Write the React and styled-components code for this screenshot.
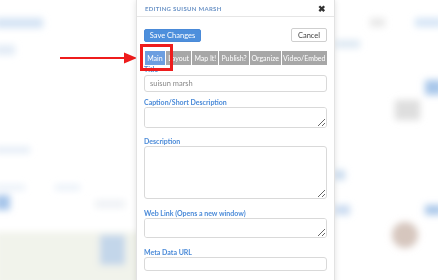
import React from 'react';
import styled, { createGlobalStyle } from 'styled-components';

const GlobalStyle = createGlobalStyle`
  html, body {
    margin: 0;
    padding: 0;
    background: #fff;
    overflow: hidden;
  }
  body {
    font-family: Lato, "Open Sans", "Liberation Sans", sans-serif;
  }
`;

const Page = styled.div`
  position: relative;
  width: 438px;
  height: 280px;
  overflow: hidden;
  padding-left: 136px;
  box-sizing: border-box;
`;

const Backdrop = styled.svg`
  position: absolute;
  left: 0;
  top: 0;
  width: 438px;
  height: 280px;
`;

const Modal = styled.div`
  position: relative;
  width: 199px;
  height: 300px;
  background: #fff;
  border-left: 1px solid #e2e2e2;
  border-right: 1px solid #e2e2e2;
  box-shadow: 0 0 6px rgba(0, 0, 0, 0.12);
  box-sizing: border-box;
`;

const Header = styled.div`
  height: 17px;
  display: flex;
  align-items: center;
  justify-content: space-between;
  padding: 1px 8px 0 8px;
  border-bottom: 1px solid #e6e6e6;
  box-sizing: border-box;
`;

const Title = styled.span`
  font-size: 6px;
  font-weight: 700;
  letter-spacing: 0.3px;
  color: #6b93c6;
  text-transform: uppercase;
`;

const Close = styled.span`
  font-size: 9px;
  font-weight: 700;
  color: #333;
  line-height: 1;
`;

const Body = styled.div`
  padding: 0 7px;
`;

const Toolbar = styled.div`
  display: flex;
  justify-content: space-between;
  align-items: center;
  margin-top: 11px;
`;

const Button = styled.button`
  font-family: inherit;
  font-size: 7.5px;
  white-space: nowrap;
  height: ${p => (p.primary ? '13px' : '14px')};
  padding: 0;
  border-radius: 2px;
  border: 1px solid ${p => (p.primary ? '#4a8ad8' : '#cfcfcf')};
  background: ${p => (p.primary ? '#4d8fdc' : '#fff')};
  color: ${p => (p.primary ? '#fff' : '#444')};
  width: ${p => p.w};
  cursor: pointer;
`;

const Tabs = styled.div`
  display: flex;
  gap: 1px;
  margin: 9px 0 0 1px;
`;

const Tab = styled.div`
  height: 14px;
  width: ${p => p.w}px;
  display: flex;
  align-items: center;
  justify-content: center;
  font-size: 7px;
  color: #fff;
  background: ${p => (p.active ? '#6c9ee0' : '#a7a7a7')};
`;

const Field = styled.div`
  margin-bottom: ${p => p.mb}px;
`;

const Label = styled.div`
  height: ${p => p.h || 8}px;
  line-height: ${p => p.h || 8}px;
  margin-bottom: 1px;
  font-size: 7px;
  font-weight: 700;
  color: #4a8ad8;
`;

const Input = styled.input`
  display: block;
  width: 100%;
  height: ${p => p.h}px;
  box-sizing: border-box;
  border: 1px solid #d9d9d9;
  border-radius: 3px;
  padding: 0 5px;
  font-family: inherit;
  font-size: 7.5px;
  color: #888;
  outline: none;
`;

const TextArea = styled.textarea`
  display: block;
  width: 100%;
  height: ${p => p.h}px;
  box-sizing: border-box;
  border: 1px solid #d9d9d9;
  border-radius: 3px;
  resize: vertical;
  font-family: inherit;
  outline: none;
`;

const Highlight = styled.div`
  position: absolute;
  left: 3px;
  top: 44px;
  width: 33px;
  height: 27px;
  border: 3px solid #ee1c1c;
  box-sizing: border-box;
`;

const Arrow = styled.svg`
  position: absolute;
  left: 58px;
  top: 51px;
`;

const tabs = [
  ['Main', 20],
  ['Layout', 26],
  ['Map It!', 26],
  ['Publish?', 30],
  ['Organize', 31],
  ['Video/Embed', 46],
];

function BlurredPage() {
  return (
    <Backdrop viewBox="0 0 438 280">
      <defs>
        <filter id="b" x="-50%" y="-50%" width="200%" height="200%">
          <feGaussianBlur stdDeviation="3.5" />
        </filter>
      </defs>
      <g filter="url(#b)">
        <rect x="-5" y="18" width="48" height="10" fill="#d4e3f4" />
        <rect x="-5" y="45" width="20" height="10" fill="#e2ebf6" />
        <rect x="-5" y="147" width="35" height="6" fill="#e2ebf6" />
        <rect x="-5" y="185" width="30" height="5" fill="#e6eef8" />
        <rect x="55" y="185" width="25" height="5" fill="#e6eef8" />
        <rect x="-5" y="195" width="15" height="15" fill="#a6c5ea" />
        <rect x="-5" y="232" width="145" height="55" fill="#f1f3eb" />
        <rect x="100" y="235" width="25" height="30" fill="#c3d6ea" />
        <rect x="95" y="200" width="30" height="8" fill="#eef1f5" />
        <rect x="415" y="18" width="28" height="9" fill="#d6e5f6" />
        <rect x="370" y="18" width="15" height="9" fill="#e8e8e8" />
        <rect x="335" y="40" width="25" height="8" fill="#dde8f3" />
        <rect x="425" y="80" width="18" height="15" fill="#a8c7ea" />
        <rect x="395" y="100" width="25" height="20" fill="#dedede" />
        <rect x="335" y="170" width="10" height="10" fill="#c8daee" />
        <rect x="425" y="205" width="18" height="10" fill="#aac8ea" />
        <rect x="335" y="205" width="15" height="10" fill="#cadcf1" />
        <circle cx="405" cy="235" r="13" fill="#d6c6be" />
      </g>
    </Backdrop>
  );
}

export default function App() {
  return (
    <>
      <GlobalStyle />
      <Page>
        <BlurredPage />
        <Arrow width="80" height="14" viewBox="0 0 80 14">
          <line x1="2" y1="7" x2="68" y2="7" stroke="#ee1c1c" strokeWidth="2.2" />
          <polygon points="66,1.5 79,7 66,12.5" fill="#ee1c1c" />
        </Arrow>
        <Modal>
          <Header>
            <Title>Editing Suisun Marsh</Title>
            <Close>✖</Close>
          </Header>
          <Body>
            <Toolbar>
              <Button primary w="57px">Save Changes</Button>
              <Button w="36px">Cancel</Button>
            </Toolbar>
            <Tabs>
              {tabs.map(([name, w], i) => (
                <Tab key={name} w={w} active={i === 0}>{name}</Tab>
              ))}
            </Tabs>
            <Field mb={6}>
              <Label h={9}>Title</Label>
              <Input h={17} defaultValue="suisun marsh" />
            </Field>
            <Field mb={9}>
              <Label>Caption/Short Description</Label>
              <TextArea h={21} />
            </Field>
            <Field mb={10}>
              <Label>Description</Label>
              <TextArea h={53} />
            </Field>
            <Field mb={10}>
              <Label>Web Link (Opens a new window)</Label>
              <TextArea h={20} />
            </Field>
            <Field mb={10}>
              <Label>Meta Data URL</Label>
              <Input h={14} />
            </Field>
          </Body>
          <Highlight />
        </Modal>
      </Page>
    </>
  );
}
